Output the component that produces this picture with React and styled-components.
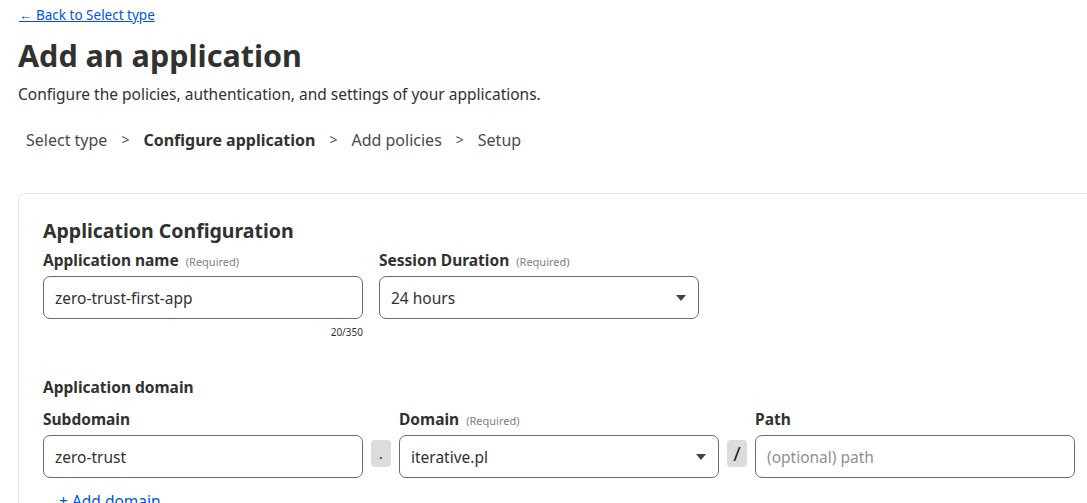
import React from "react";
import styled, { createGlobalStyle } from "styled-components";

const GlobalStyle = createGlobalStyle`
  html, body {
    margin: 0;
    padding: 0;
    background: #ffffff;
    overflow: hidden;
  }
  body {
    font-family: "Noto Sans", "Open Sans", sans-serif;
    color: #313131;
  }
`;

const Page = styled.div`
  padding: 3px 0 0 18px;
  width: 1200px;
`;

const BackLink = styled.a`
  display: inline-block;
  margin-left: 1px;
  font-size: 13.5px;
  line-height: 20px;
  color: #0055dd;
  text-decoration: underline;
  cursor: pointer;
`;

const Title = styled.h1`
  margin: 12px 0 0;
  font-size: 30.5px;
  line-height: 36px;
  font-weight: 700;
  color: #313131;
`;

const Subtitle = styled.p`
  margin: 10px 0 0;
  font-size: 15.5px;
  line-height: 22px;
`;

const Steps = styled.div`
  display: flex;
  align-items: center;
  gap: 14px;
  margin: 24px 0 0 8px;
  font-size: 16px;
  line-height: 22px;
  color: #4a4a4a;
`;

const Step = styled.span`
  font-weight: ${({ $active }) => ($active ? 700 : 400)};
  color: ${({ $active }) => ($active ? "#313131" : "#4a4a4a")};
`;

const Chevron = styled.span`
  font-size: 14px;
  color: #4a4a4a;
`;

const Card = styled.section`
  margin-top: 42px;
  border: 1px solid #e2e2e2;
  border-radius: 7px;
  padding: 24px 24px 40px 24px;
`;

const SectionTitle = styled.h2`
  margin: 0;
  font-size: 19.5px;
  line-height: 26px;
  font-weight: 700;
`;

const SubTitle = styled.h3`
  margin: 37px 0 0;
  font-size: 15.5px;
  line-height: 22px;
  font-weight: 700;
`;

const Row = styled.div`
  display: flex;
  align-items: flex-start;
  gap: ${({ $gap }) => $gap || 16}px;
  margin-top: ${({ $top }) => $top || 0}px;
`;

const Field = styled.div`
  display: flex;
  flex-direction: column;
  width: 320px;
`;

const Label = styled.label`
  display: flex;
  align-items: baseline;
  gap: 7px;
  height: 24px;
  font-size: 15.5px;
  line-height: 24px;
  font-weight: 700;
  color: #313131;
`;

const Required = styled.span`
  font-size: 11px;
  font-weight: 400;
  color: #808080;
`;

const Box = styled.div`
  box-sizing: border-box;
  display: flex;
  align-items: center;
  justify-content: space-between;
  height: 43px;
  margin-top: 4px;
  padding: 0 12px 0 11px;
  border: 1px solid #6b6b6b;
  border-radius: 7px;
  font-size: 15.5px;
  color: ${({ $placeholder }) => ($placeholder ? "#8f8f8f" : "#313131")};
`;

const Caret = styled.span`
  width: 0;
  height: 0;
  border-left: 5.5px solid transparent;
  border-right: 5.5px solid transparent;
  border-top: 6px solid #444;
`;

const Counter = styled.div`
  align-self: flex-end;
  margin-top: 6px;
  font-size: 10px;
  line-height: 14px;
  color: #313131;
`;

const Sep = styled.div`
  display: flex;
  align-items: center;
  justify-content: center;
  width: 20px;
  height: 27px;
  margin-top: 33px;
  border-radius: 4px;
  background: #dcdcdc;
  font-size: ${({ $big }) => ($big ? 20 : 14)}px;
  color: #222;
`;

const DomainRow = styled.div`
  display: flex;
  align-items: flex-start;
  gap: 8px;
  margin-top: 9px;
`;

const AddLink = styled.a`
  display: block;
  margin: 12px 0 0 16px;
  font-size: 15.5px;
  color: #0055dd;
`;

export default function App() {
  return (
    <>
      <GlobalStyle />
      <Page>
        <BackLink>← Back to Select type</BackLink>
        <Title>Add an application</Title>
        <Subtitle>Configure the policies, authentication, and settings of your applications.</Subtitle>
        <Steps>
          <Step>Select type</Step>
          <Chevron>&gt;</Chevron>
          <Step $active>Configure application</Step>
          <Chevron>&gt;</Chevron>
          <Step>Add policies</Step>
          <Chevron>&gt;</Chevron>
          <Step>Setup</Step>
        </Steps>

        <Card>
          <SectionTitle>Application Configuration</SectionTitle>
          <Row $gap={16} $top={4}>
            <Field>
              <Label>
                Application name <Required>(Required)</Required>
              </Label>
              <Box>zero-trust-first-app</Box>
              <Counter>20/350</Counter>
            </Field>
            <Field>
              <Label>
                Session Duration <Required>(Required)</Required>
              </Label>
              <Box>
                24 hours
                <Caret />
              </Box>
            </Field>
          </Row>

          <SubTitle>Application domain</SubTitle>
          <DomainRow>
            <Field>
              <Label>Subdomain</Label>
              <Box>zero-trust</Box>
            </Field>
            <Sep>.</Sep>
            <Field>
              <Label>
                Domain <Required>(Required)</Required>
              </Label>
              <Box>
                iterative.pl
                <Caret />
              </Box>
            </Field>
            <Sep $big>/</Sep>
            <Field>
              <Label>Path</Label>
              <Box $placeholder>(optional) path</Box>
            </Field>
          </DomainRow>
          <AddLink>+ Add domain</AddLink>
        </Card>
      </Page>
    </>
  );
}
